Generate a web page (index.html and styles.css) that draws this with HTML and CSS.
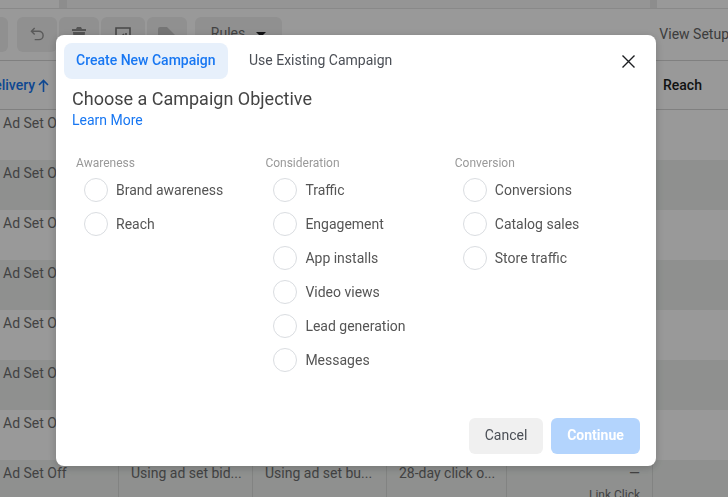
FILE: index.html
```html
<!DOCTYPE html>
<html lang="en">
<head>
<meta charset="utf-8">
<title>Create New Campaign</title>
<link rel="stylesheet" href="styles.css">
</head>
<body>
<div class="page">
  <div class="strip"><span class="strip-a"></span><span class="strip-b"></span><span class="strip-c"></span></div>
  <div class="toolbar">
    <div class="tool tool-first"></div>
    <div class="tool tool-undo">
      <svg width="15" height="15" viewBox="0 0 16 16" fill="none" stroke="#969696" stroke-width="1.5"><path d="M5 1 1.5 4.5 5 8M2 4.5h7.5a4.5 4.5 0 0 1 0 9H5"/></svg>
    </div>
    <div class="tool tool-trash">
      <svg width="14" height="18" viewBox="0 0 14 18" fill="#8c8c8c"><path d="M5 0h4l1 2h4v2H0V2h4zM1 5h12l-1 13H2z"/></svg>
    </div>
    <div class="tool tool-img">
      <svg width="16" height="18" viewBox="0 0 16 18" fill="none" stroke="#777" stroke-width="1.6"><path d="M1 17V1h14v16zM5 11l4-4M11 6v5"/></svg>
    </div>
    <div class="tool tool-tag">
      <svg width="18" height="18" viewBox="0 0 18 18" fill="#c4c4c4"><path d="M2 0h7l9 9-8 9L0 8V2a2 2 0 0 1 2-2z"/></svg>
    </div>
    <div class="tool tool-rules"><span>Rules</span><i class="caret"></i></div>
    <div class="view-setup">View Setup</div>
  </div>
  <div class="thead">
    <div class="th th-first"><span class="sorted">Delivery<svg class="arrow" width="11" height="13" viewBox="0 0 11 13" fill="none" stroke="#1877f2" stroke-width="1.6"><path d="M5.5 13V1.5M1 6l4.5-4.5L10 6"/></svg></span></div>
    <div class="th th-reach">Reach</div>
  </div>
  <div class="row"><div class="cell">Ad Set Off</div></div>
  <div class="row alt"><div class="cell">Ad Set Off</div></div>
  <div class="row"><div class="cell">Ad Set Off</div></div>
  <div class="row alt"><div class="cell">Ad Set Off</div></div>
  <div class="row"><div class="cell">Ad Set Off</div></div>
  <div class="row alt"><div class="cell">Ad Set Off</div></div>
  <div class="row"><div class="cell">Ad Set Off</div></div>
  <div class="row alt last">
    <div class="cell c1">Ad Set Off</div>
    <div class="cell c2">Using ad set bid...</div>
    <div class="cell c2">Using ad set bu...</div>
    <div class="cell c3">28-day click o...</div>
    <div class="cell c4"><span>—</span><span class="sub">Link Click</span></div>
    <div class="cell c5"></div>
  </div>
</div>

<div class="overlay"></div>

<div class="modal">
  <div class="tabs">
    <div class="tab active">Create New Campaign</div>
    <div class="tab">Use Existing Campaign</div>
    <svg class="close" width="13" height="13" viewBox="0 0 13 13" stroke="#1c1e21" stroke-width="1.4"><path d="M.5.5l12 12M12.5.5l-12 12"/></svg>
  </div>
  <h1>Choose a Campaign Objective</h1>
  <a class="learn">Learn More</a>
  <div class="columns">
    <div class="col">
      <div class="col-title">Awareness</div>
      <div class="opt"><i></i>Brand awareness</div>
      <div class="opt"><i></i>Reach</div>
    </div>
    <div class="col">
      <div class="col-title">Consideration</div>
      <div class="opt"><i></i>Traffic</div>
      <div class="opt"><i></i>Engagement</div>
      <div class="opt"><i></i>App installs</div>
      <div class="opt"><i></i>Video views</div>
      <div class="opt"><i></i>Lead generation</div>
      <div class="opt"><i></i>Messages</div>
    </div>
    <div class="col">
      <div class="col-title">Conversion</div>
      <div class="opt"><i></i>Conversions</div>
      <div class="opt"><i></i>Catalog sales</div>
      <div class="opt"><i></i>Store traffic</div>
    </div>
  </div>
  <div class="actions">
    <button class="btn cancel">Cancel</button>
    <button class="btn continue">Continue</button>
  </div>
</div>
</body>
</html>
```
FILE: styles.css
```css
* { box-sizing: border-box; }
html, body { margin: 0; height: 100%; overflow: hidden; }
body { font-family: Roboto, "Liberation Sans", sans-serif; font-size: 14px; color: #6f6f6f; background: #fff; }

.page { width: 728px; height: 497px; overflow: hidden; }

.strip { display: flex; height: 9px; border-bottom: 1px solid #e4e4e4; }
.strip-a { width: 59px; }
.strip-b { width: 8px; background: #ececec; }
.strip-c { width: 590px; background: #f9f9f9; border-right: 7px solid #ececec; }

.toolbar { display: flex; height: 52px; padding-top: 8px; border-bottom: 1px solid #d6d6d6; }
.tool { height: 35px; display: flex; justify-content: center; padding-top: 10px; background: #f0f0f0; border-radius: 6px; margin-right: 2px; flex: none; }
.tool-first { width: 38px; margin-left: -30px; margin-right: 9px; }
.tool-undo { width: 40px; }
.tool-trash { width: 40px; }
.tool-img { width: 44px; }
.tool-tag { width: 40px; margin-right: 8px; }
.tool-rules { width: 87px; gap: 11px; padding-top: 8px; margin-right: 0; color: #6f6f6f; }
.caret { width: 0; height: 0; margin-top: 7px; border-left: 5px solid transparent; border-right: 5px solid transparent; border-top: 5px solid #1c1e21; }
.view-setup { margin: 8px -1px 0 auto; line-height: 18px; color: #666; white-space: nowrap; }

.thead { display: flex; justify-content: space-between; height: 49px; border-bottom: 1px solid #d6d6d6; font-weight: 500; line-height: 49px; }
.sorted { display: flex; align-items: center; gap: 3px; margin-left: -15px; color: #1877f2; }
.arrow { flex: none; }
.th-reach { width: 65px; color: #1c1e21; }

.row { display: flex; height: 50px; line-height: 18px; }
.row.alt { background: #eef1ef; }
.cell { padding: 4px 0 0 3px; color: #6f6f6f; }
.last .cell { height: 50px; border-right: 1px solid #d9dbd9; }
.c1 { width: 119px; }
.c2 { width: 134px; padding-left: 12px; }
.c3 { width: 120px; padding-left: 12px; }
.c4 { width: 146px; padding-right: 12px; display: flex; flex-direction: column; align-items: flex-end; }
.c5 { flex: 1; }
.last .c5 { border-right: 0; }
.sub { font-size: 12px; margin-top: 4px; }

.overlay { position: fixed; inset: 0; background: rgba(0, 0, 0, .4); }

.modal { position: fixed; left: 56px; top: 35px; width: 600px; height: 431px; padding: 8px 16px 12px 8px; background: #fff; border-radius: 8px; box-shadow: 0 2px 10px rgba(0, 0, 0, .2); display: flex; flex-direction: column; }

.tabs { display: flex; align-items: center; height: 36px; flex: none; }
.tab { height: 36px; line-height: 34px; padding: 0 21px; color: #4b4f56; white-space: nowrap; }
.tab.active { width: 164px; padding: 0 12px; background: #e7f0fb; color: #1877f2; font-weight: 500; border-radius: 8px; }
.close { margin-left: auto; margin-right: 5px; }

h1 { margin: 10px 0 0 8px; font-size: 18px; font-weight: 400; line-height: 20px; color: #444; }
.learn { margin: 3px 0 0 8px; line-height: 17px; color: #1877f2; }

.columns { display: flex; margin-top: 27px; padding-left: 12px; flex: 1; }
.col { width: 189.4px; flex: none; }
.col-title { font-size: 12px; line-height: 14px; color: #999; margin-bottom: 3px; }
.opt { display: flex; align-items: center; height: 34px; margin-left: 8px; gap: 8px; color: #555; }
.opt i { width: 24px; height: 24px; border: 1px solid #dadde1; border-radius: 50%; flex: none; }

.actions { display: flex; justify-content: flex-end; gap: 8px; }
.btn { height: 36px; padding: 0 0 2px; border: 0; border-radius: 6px; font: inherit; cursor: pointer; }
.cancel { width: 74px; background: #f0f0f0; color: #4b4f56; }
.continue { width: 89px; background: #b3d4fd; color: #fff; font-weight: 700; }
```
